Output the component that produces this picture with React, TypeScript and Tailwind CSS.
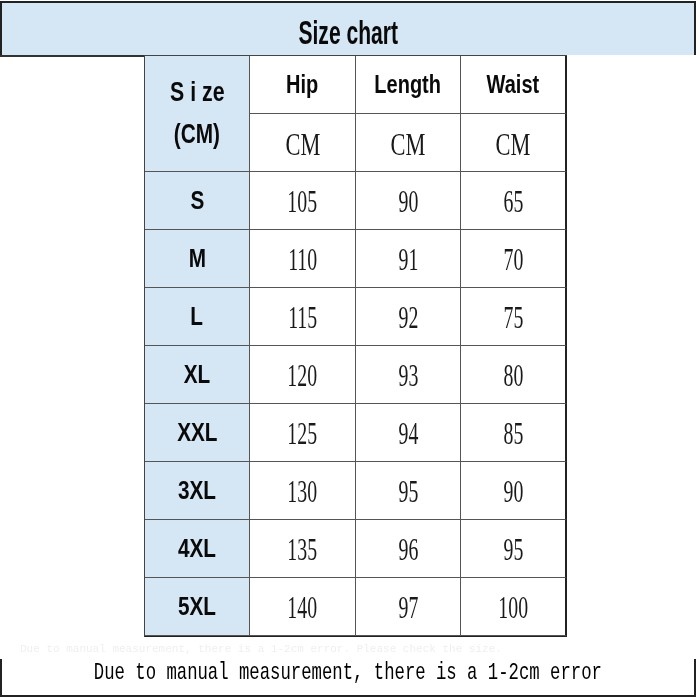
import React from "react";

const rows: [string, string, string, string][] = [
  ["S", "105", "90", "65"],
  ["M", "110", "91", "70"],
  ["L", "115", "92", "75"],
  ["XL", "120", "93", "80"],
  ["XXL", "125", "94", "85"],
  ["3XL", "130", "95", "90"],
  ["4XL", "135", "96", "95"],
  ["5XL", "140", "97", "100"],
];

const sans = { fontFamily: '"Liberation Sans", Arial, sans-serif' };
const serif = { fontFamily: '"Liberation Serif", "Times New Roman", serif' };
const mono = { fontFamily: '"Liberation Mono", "Courier New", monospace' };

function Cell({
  children,
  blue,
  last,
}: {
  children: React.ReactNode;
  blue?: boolean;
  last?: boolean;
}) {
  return (
    <div
      className={
        "h-[58px] flex items-center justify-center border-b border-[#555] " +
        (last ? "border-r-2 border-r-[#222] " : "border-r border-r-[#555] ") +
        (blue ? "bg-[#d5e6f4]" : "bg-white")
      }
    >
      {children}
    </div>
  );
}

function Head({ t }: { t: string }) {
  return (
    <span
      className="inline-block text-[25px] font-bold text-[#0a0a0a] scale-x-[0.8] scale-y-[1.05] leading-none"
      style={sans}
    >
      {t}
    </span>
  );
}

function Num({ t }: { t: string }) {
  return (
    <span
      className="inline-block text-[31px] text-[#1a1a1a] scale-x-[0.64] leading-none pt-[2px]"
      style={serif}
    >
      {t}
    </span>
  );
}

function Cm() {
  return (
    <span
      className="inline-block text-[32px] text-[#1a1a1a] scale-x-[0.7] leading-none pt-[2px]"
      style={serif}
    >
      CM
    </span>
  );
}

export default function App() {
  return (
    <div className="w-[700px] h-[700px] bg-white overflow-hidden">
      <div className="mt-[1px] w-[696px] h-[54px] bg-[#d5e6f4] border-t-2 border-l-2 border-r-2 border-[#222] flex items-center justify-center pt-[6px]">
        <span
          className="inline-block text-[31px] font-bold text-[#0a0a0a] scale-x-[0.68] scale-y-[1.05] leading-none"
          style={sans}
        >
          Size chart
        </span>
      </div>
      <div className="flex">
        <div className="w-[144px] border-t-2 border-[#333]" />
        <div className="grid grid-cols-[105px_106px_105px_106px] border-l border-t border-[#444] border-b border-b-[#222]">
          <div className="row-span-2 h-[116px] bg-[#d5e6f4] border-r border-b border-[#555] flex flex-col items-center justify-center gap-[16px] pb-[2px]">
            <span
              className="inline-block text-[26px] font-bold text-[#0a0a0a] scale-x-[0.82] scale-y-[1.05] leading-none whitespace-pre"
              style={sans}
            >
              {"S i ze"}
            </span>
            <span
              className="inline-block text-[26px] font-bold text-[#0a0a0a] scale-x-[0.8] scale-y-[1.05] leading-none"
              style={sans}
            >
              (CM)
            </span>
          </div>
          <Cell>
            <Head t="Hip" />
          </Cell>
          <Cell>
            <Head t="Length" />
          </Cell>
          <Cell last>
            <Head t="Waist" />
          </Cell>
          <Cell>
            <Cm />
          </Cell>
          <Cell>
            <Cm />
          </Cell>
          <Cell last>
            <Cm />
          </Cell>
          {rows.map((r) => (
            <React.Fragment key={r[0]}>
              <Cell blue>
                <span
                  className="inline-block text-[25px] font-bold text-[#0a0a0a] scale-x-[0.83] scale-y-[1.05] leading-none"
                  style={sans}
                >
                  {r[0]}
                </span>
              </Cell>
              <Cell>
                <Num t={r[1]} />
              </Cell>
              <Cell>
                <Num t={r[2]} />
              </Cell>
              <Cell last>
                <Num t={r[3]} />
              </Cell>
            </React.Fragment>
          ))}
        </div>
      </div>
      <div className="h-[22px] flex items-end pl-[20px] pb-[4px] overflow-hidden">
        <span
          className="inline-block text-[11px] text-[#efefef] leading-none whitespace-nowrap blur-[0.6px]"
          style={mono}
        >
          Due to manual measurement, there is a 1-2cm error. Please check the size.
        </span>
      </div>
      <div className="w-[696px] h-[38px] border-l-2 border-r-2 border-b-2 border-[#222] flex justify-center pt-[2px]">
        <span
          className="inline-block text-[24px] text-[#000] scale-x-[0.72] leading-none whitespace-nowrap"
          style={mono}
        >
          Due to manual measurement, there is a 1-2cm error
        </span>
      </div>
    </div>
  );
}
